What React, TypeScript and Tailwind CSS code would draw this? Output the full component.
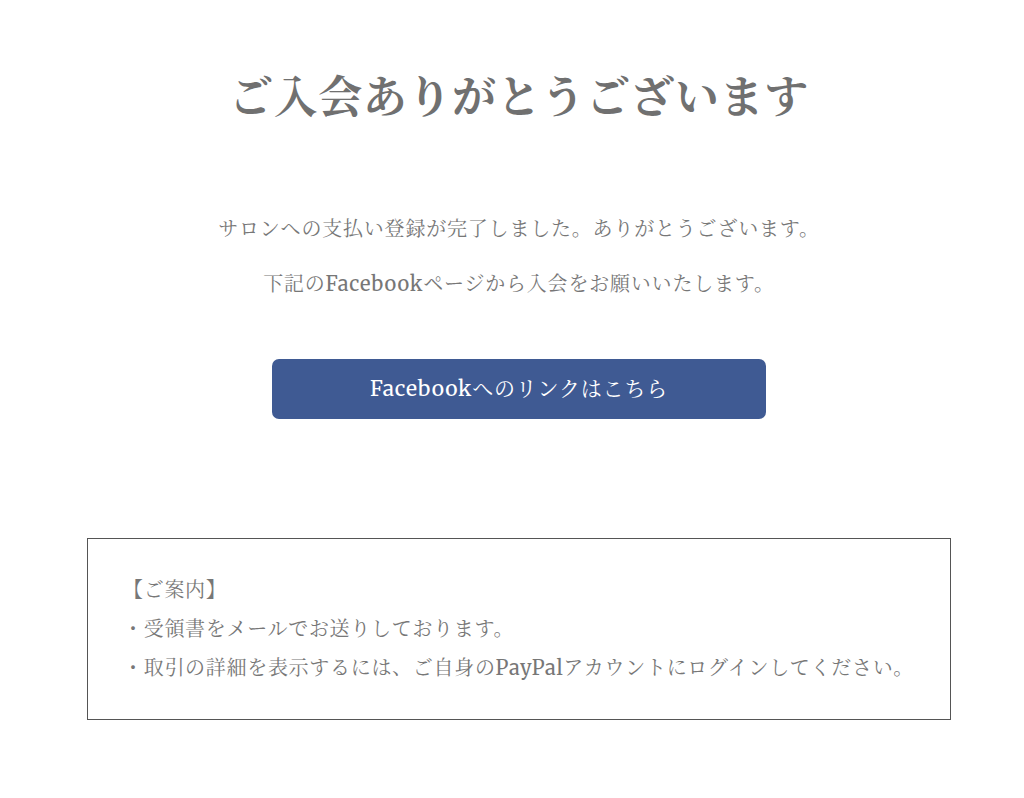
const font = {
  fontFamily:
    '"Merriweather", "Liberation Serif", "Noto Serif CJK JP", "Noto Sans CJK JP", serif',
};

export default function App() {
  return (
    <div className="min-h-[798px] w-full bg-white text-[#777]" style={font}>
      <div className="ml-[87px] w-[864px] pt-[68px]">
        <h1 className="text-center text-[44px] font-bold leading-[60px] tracking-[0.6px] text-[#707070]">
          ご入会ありがとうございます
        </h1>

        <div className="mt-[86px] text-center text-[20px] leading-[30px] tracking-[0.8px]">
          <p>サロンへの支払い登録が完了しました。ありがとうございます。</p>
          <p className="mt-[25px]">下記のFacebookページから入会をお願いいたします。</p>
        </div>

        <div className="mt-[60px] flex justify-center">
          <a
            href="#"
            className="flex h-[60px] w-[494px] items-center justify-center rounded-[7px] bg-[#3f5a93] text-[21px] tracking-[0.8px] text-white"
          >
            Facebookへのリンクはこちら
          </a>
        </div>

        <div className="mt-[119px] whitespace-nowrap border border-[#555] pl-[35px] pr-[20px] pt-[31px] pb-[32px] text-[20px] leading-[39px] tracking-[0.7px]">
          <p>【ご案内】</p>
          <p>・受領書をメールでお送りしております。</p>
          <p>・取引の詳細を表示するには、ご自身のPayPalアカウントにログインしてください。</p>
        </div>
      </div>
    </div>
  );
}
